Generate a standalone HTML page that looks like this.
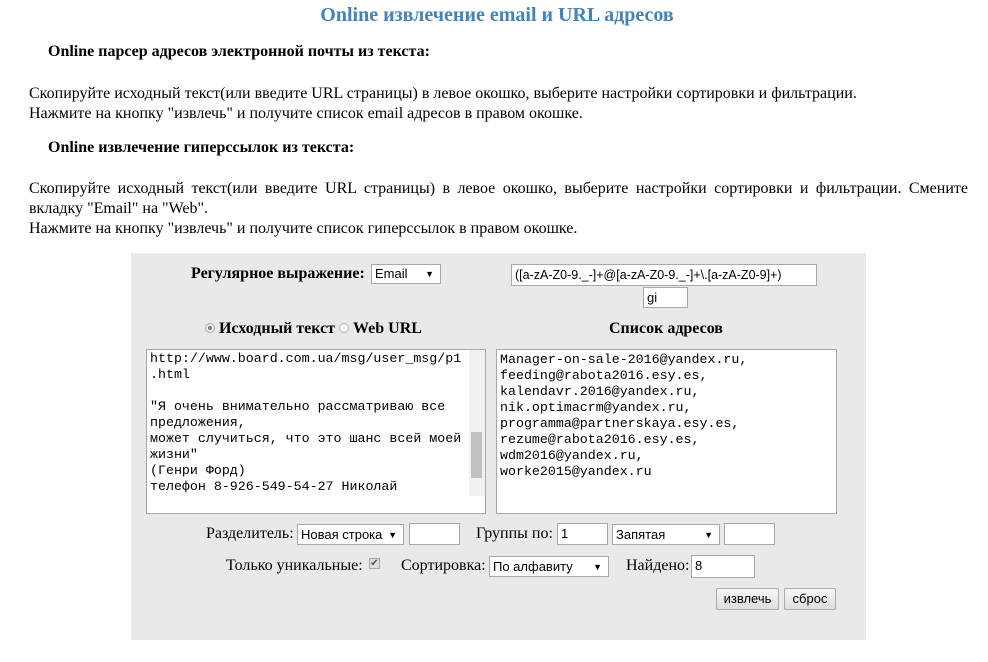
<!DOCTYPE html>
<html><head><meta charset="utf-8"><style>
body{margin:0;width:988px;height:662px;background:#fff;font-family:"Liberation Serif",serif;font-size:16px;color:#000;position:relative;overflow:hidden}
.a{position:absolute;white-space:nowrap}
.in{position:absolute;background:#fff;border:1px solid #a9a9a9;box-sizing:border-box;font-family:"Liberation Sans",sans-serif;font-size:13px;line-height:20px;padding-left:3px;white-space:nowrap}
.sel:after{content:"▼";position:absolute;right:6px;top:0;font-size:9px}
.ta{position:absolute;background:#fff;border:1px solid #a9a9a9;box-sizing:border-box;font-family:"Liberation Mono",monospace;font-size:13.3px;line-height:16px;padding:2px 3px;white-space:pre}
.btn{position:absolute;background:linear-gradient(#f6f6f6,#dedede);border:1px solid #adadad;border-radius:2px;box-sizing:border-box;font-family:"Liberation Sans",sans-serif;font-size:13px;line-height:20px;text-align:center}
</style></head><body>
<div class="a" style="left:0;width:994px;text-align:center;top:4px;font-size:20px;font-weight:bold;color:#4682b4">Online извлечение email и URL адресов</div>
<div class="a" style="left:48px;top:43px;font-weight:bold">Online парсер адресов электронной почты из текста:</div>
<div class="a" style="left:29px;top:84px;line-height:20px">Скопируйте исходный текст(или введите URL страницы) в левое окошко, выберите настройки сортировки и фильтрации.<br>Нажмите на кнопку "извлечь" и получите список email адресов в правом окошке.</div>
<div class="a" style="left:48px;top:139px;font-weight:bold">Online извлечение гиперссылок из текста:</div>
<div class="a" style="left:29px;top:179px;line-height:20px;white-space:normal;width:939px;text-align:justify;text-align-last:left">Скопируйте исходный текст(или введите URL страницы) в левое окошко, выберите настройки сортировки и фильтрации. Смените вкладку "Email" на "Web".<br>Нажмите на кнопку "извлечь" и получите список гиперссылок в правом окошке.</div>

<div style="position:absolute;left:131px;top:253px;width:735px;height:387px;background:#e8e9ea"></div>
<div class="a" style="left:191px;top:265px;font-weight:bold">Регулярное выражение:</div>
<div class="in sel" style="left:371px;top:264px;width:70px;height:20px;line-height:18px">Email</div>
<div class="in" style="left:511px;top:264px;width:306px;height:22px;font-size:12.5px">([a-zA-Z0-9._-]+@[a-zA-Z0-9._-]+\.[a-zA-Z0-9]+)</div>
<div class="in" style="left:643px;top:287px;width:45px;height:21px">gi</div>

<div class="a" style="left:205px;top:320px;font-weight:bold"><span style="display:inline-block;width:10px;height:10px;border-radius:50%;border:1px solid #aaa;background:radial-gradient(#777 30%,#eee 40%);vertical-align:0px;box-sizing:border-box"></span> Исходный текст <span style="display:inline-block;width:10px;height:10px;border-radius:50%;border:1px solid #bbb;background:#f6f6f6;vertical-align:0px;box-sizing:border-box"></span> Web URL</div>
<div class="a" style="left:609px;top:320px;font-weight:bold">Список адресов</div>

<div class="ta" style="left:146px;top:349px;width:340px;height:165px;padding-top:1px">http://www.board.com.ua/msg/user_msg/p1
.html

"Я очень внимательно рассматриваю все
предложения,
может случиться, что это шанс всей моей
жизни"
(Генри Форд)
телефон 8-926-549-54-27 Николай</div>
<div style="position:absolute;left:469px;top:350px;width:16px;height:146px;background:#f1f1f1"></div>
<div style="position:absolute;left:471px;top:432px;width:11px;height:46px;background:#c1c1c1"></div>
<div class="ta" style="left:496px;top:349px;width:341px;height:165px">Manager-on-sale-2016@yandex.ru,
feeding@rabota2016.esy.es,
kalendavr.2016@yandex.ru,
nik.optimacrm@yandex.ru,
programma@partnerskaya.esy.es,
rezume@rabota2016.esy.es,
wdm2016@yandex.ru,
worke2015@yandex.ru</div>

<div class="a" style="left:206px;top:525px">Разделитель:</div>
<div class="in sel" style="left:297px;top:524px;width:107px;height:21px">Новая строка</div>
<div class="in" style="left:409px;top:523px;width:51px;height:22px"></div>
<div class="a" style="left:476px;top:525px">Группы по:</div>
<div class="in" style="left:557px;top:523px;width:51px;height:22px">1</div>
<div class="in sel" style="left:612px;top:524px;width:108px;height:21px">Запятая</div>
<div class="in" style="left:724px;top:523px;width:51px;height:22px"></div>

<div class="a" style="left:226px;top:557px">Только уникальные:</div>
<div style="position:absolute;left:369px;top:558px;width:11px;height:11px;border:1px solid #aaa;background:#ddd;box-sizing:border-box;font-size:10px;line-height:9px;text-align:center;color:#555">✔</div>
<div class="a" style="left:401px;top:557px">Сортировка:</div>
<div class="in sel" style="left:489px;top:556px;width:120px;height:21px">По алфавиту</div>
<div class="a" style="left:626px;top:557px">Найдено:</div>
<div class="in" style="left:691px;top:555px;width:64px;height:23px">8</div>

<div class="btn" style="left:716px;top:588px;width:63px;height:22px">извлечь</div>
<div class="btn" style="left:784px;top:588px;width:52px;height:22px">сброс</div>
</body></html>
